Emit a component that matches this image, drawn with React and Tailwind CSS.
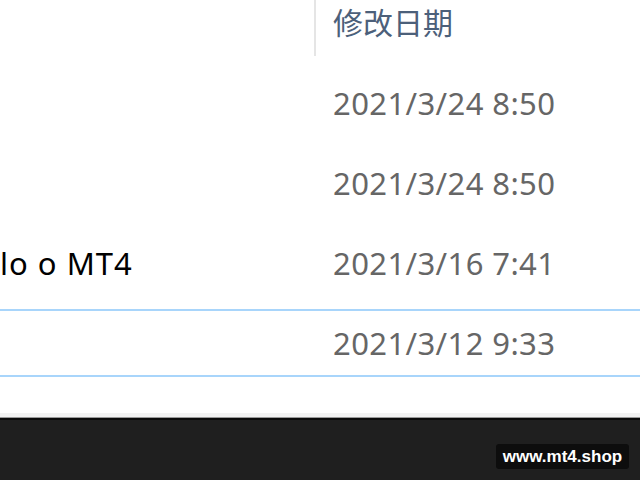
export default function App() {
  const rows = [
    { name: "", date: "2021/3/24 8:50" },
    { name: "", date: "2021/3/24 8:50" },
    { name: "lo o MT4", date: "2021/3/16 7:41" },
    { name: "", date: "2021/3/12 9:33", selected: true },
  ];
  const font = { fontFamily: '"Noto Sans", "Noto Sans CJK SC", sans-serif' };
  return (
    <div className="w-[640px] h-[480px] bg-white flex flex-col overflow-hidden" style={font}>
      <div className="flex-1 flex flex-col">
        <div className="flex h-[56px]">
          <div className="w-[314px]" />
          <div className="w-[2px] bg-[#e5e5e5]" />
          <div className="pl-[17px] pt-[1px] text-[30px] leading-[40px] text-[#4c607a]" style={{ fontFamily: '"Noto Sans CJK SC", sans-serif' }}>
            修改日期
          </div>
        </div>
        <div className="pt-[9px] flex flex-col">
          {rows.map((r, i) => (
            <div key={i} className="h-[80px] flex flex-col">
              <div
                className={
                  "mt-[4px] h-[68px] flex items-center border-y-2 " +
                  (r.selected ? "border-[#a8d5fb]" : "border-transparent")
                }
              >
                <div className="w-[316px] text-[31px] tracking-[1px] text-black whitespace-nowrap overflow-hidden">
                  {r.name}
                </div>
                <div className="pl-[17px] text-[31px] text-[#666666] whitespace-nowrap tracking-[0.4px]">
                  {r.date}
                </div>
              </div>
            </div>
          ))}
        </div>
      </div>
      <div className="h-[4px] bg-[#f2f2f2]" />
      <div className="h-[1px] bg-[#9a9a9a]" />
      <div className="h-[2px] bg-[#0a0a0a]" />
      <div className="h-[60px] bg-[#1f1f1f] flex justify-end pr-[11px] pt-[24px]">
        <div
          className="h-[25px] w-[133px] rounded-[3px] bg-[#0d0d0d] flex items-center justify-center text-white font-bold text-[17px]"
          style={{ fontFamily: '"Liberation Sans", Arial, sans-serif' }}
        >
          www.mt4.shop
        </div>
      </div>
    </div>
  );
}
